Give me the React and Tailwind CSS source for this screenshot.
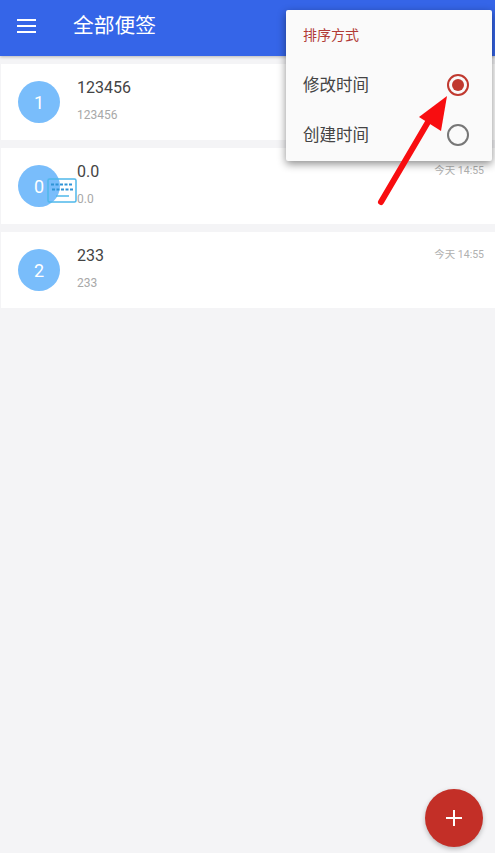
const notes = [
  { id: 1, badge: "1", title: "123456", body: "123456" },
  { id: 2, badge: "0", title: "0.0", body: "0.0" },
  { id: 3, badge: "2", title: "233", body: "233" },
]

const NoteCard = ({ note }) => {
  return (
    <div className="ml-px flex h-[76px] items-center bg-white pl-[17px] pr-[11px]">
      <div className="flex h-[42px] w-[42px] shrink-0 items-center justify-center rounded-full bg-[#79bdfb] text-[18px] text-white">
        {note.badge}
      </div>

      <div className="ml-[17px] flex-1 self-start pt-[12px]">
        <p className="text-[16px] leading-[24px] text-[#444444]">{note.title}</p>
        <p className="mt-[6px] text-[12px] leading-[18px] text-[#a8a8a8]">{note.body}</p>
      </div>

      <p className="self-start pt-[16px] text-[10.5px] leading-[14px] text-[#b0b0b0]">今天 14:55</p>
    </div>
  )
}

const SortOption = ({ label, checked }) => {
  return (
    <div className="flex h-[50px] items-center justify-between pl-[17px] pr-[23px]">
      <span className="pt-[2px] text-[16.5px] text-[#444444]">{label}</span>
      {checked ? (
        <span className="flex h-[22px] w-[22px] items-center justify-center rounded-full border-2 border-[#c0392f]">
          <span className="h-[12px] w-[12px] rounded-full bg-[#c0392f]" />
        </span>
      ) : (
        <span className="h-[22px] w-[22px] rounded-full border-2 border-[#777777]" />
      )}
    </div>
  )
}

const App = () => {
  return (
    <div
      className="relative h-[853px] w-[495px] overflow-hidden bg-[#f4f4f6]"
      style={{ fontFamily: 'Roboto, "Noto Sans CJK SC", sans-serif' }}
    >
      <header className="flex h-[56px] items-center bg-[#3565e8] pb-[4px] pl-[17px] shadow-[0_1px_3px_rgba(0,0,0,0.25)]">
        <div className="flex w-[19px] flex-col gap-[4px]">
          <span className="h-[2px] bg-white" />
          <span className="h-[2px] bg-white" />
          <span className="h-[2px] bg-white" />
        </div>
        <h1 className="ml-[37px] pt-[2px] text-[20.75px] text-white">全部便签</h1>
      </header>

      <div className="flex flex-col gap-[8px] pt-[8px]">
        {notes.map((note) => (
          <NoteCard key={note.id} note={note} />
        ))}
      </div>

      {/* keyboard watermark over the second card */}
      <svg className="absolute left-[47px] top-[178px]" width="31" height="26" viewBox="0 0 31 26" fill="none">
        <rect x="1" y="1" width="28" height="23" rx="1.5" stroke="#4fb8ea" strokeWidth="1.5" />
        <path d="M4 6.5H26M5 11.5H26" stroke="#2f93d6" strokeWidth="2" strokeDasharray="3 1.5" />
        <path d="M9 18H22" stroke="#4fb8ea" strokeWidth="1.5" />
      </svg>

      <div className="absolute left-[286px] top-[10px] w-[206px] rounded-[2px] bg-[#fafafa] pb-[1px] shadow-[0_3px_8px_rgba(0,0,0,0.45)]">
        <p className="flex h-[50px] items-center pl-[17px] text-[14px] text-[#b23a36]">排序方式</p>
        <SortOption label="修改时间" checked />
        <SortOption label="创建时间" />
      </div>

      {/* red annotation arrow */}
      <svg className="absolute left-0 top-0" width="495" height="853" fill="none">
        <path d="M381 202L428 122" stroke="#f80d10" strokeWidth="6" strokeLinecap="round" />
        <path d="M447 96L419 117L441 131Z" fill="#f80d10" />
      </svg>

      <button className="absolute left-[425px] top-[789px] flex h-[58px] w-[58px] items-center justify-center rounded-full bg-[#c32f27] shadow-[0_2px_5px_rgba(0,0,0,0.25)]">
        <svg width="16" height="16" viewBox="0 0 16 16">
          <path d="M8 0V16M0 8H16" stroke="white" strokeWidth="2" />
        </svg>
      </button>
    </div>
  )
}

export default App
